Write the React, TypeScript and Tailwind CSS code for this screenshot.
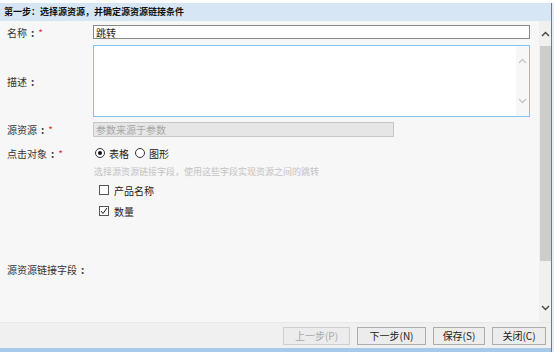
import React from 'react';

const FONT = { fontFamily: '"Microsoft YaHei", "Noto Sans CJK SC", "Noto Sans", sans-serif' };

const Label: React.FC<{ text: string; required?: boolean }> = ({ text, required }) => (
  <div className="w-[93px] shrink-0 pl-[7px] text-[10px] text-[#333] flex items-center">
    {text}
    <span className="ml-[4px] font-bold">:</span>
    {required && <span className="ml-[4px] text-[#e0303a]">*</span>}
  </div>
);

const Chevron: React.FC<{ up?: boolean; className?: string }> = ({ up, className }) => (
  <svg width="9" height="6" viewBox="0 0 9 6" className={className}>
    <path d={up ? 'M1 5L4.5 1.5L8 5' : 'M1 1L4.5 4.5L8 1'} fill="none" stroke="currentColor" strokeWidth="1.4" />
  </svg>
);

const Radio: React.FC<{ checked?: boolean; label: string }> = ({ checked, label }) => (
  <label className="flex items-center gap-[4px]">
    <span className="w-[10px] h-[10px] rounded-full border border-[#333] bg-white flex items-center justify-center">
      {checked && <span className="w-[4px] h-[4px] rounded-full bg-[#111]" />}
    </span>
    <span className="text-[10px] text-[#222]">{label}</span>
  </label>
);

const Check: React.FC<{ checked?: boolean; label: string }> = ({ checked, label }) => (
  <label className="flex items-center gap-[5px] h-[12px]">
    <span className="w-[10px] h-[10px] border border-[#555] bg-white flex items-center justify-center">
      {checked && (
        <svg width="8" height="8" viewBox="0 0 8 8">
          <path d="M1 4L3 6.5L7 1" fill="none" stroke="#222" strokeWidth="1" />
        </svg>
      )}
    </span>
    <span className="text-[10px] text-[#222]">{label}</span>
  </label>
);

const Btn: React.FC<{ w: string; disabled?: boolean; children: React.ReactNode }> = ({ w, disabled, children }) => (
  <button
    className={`${w} h-[18px] border bg-[#ececec] text-[10px] flex items-center justify-center ${
      disabled ? 'border-[#cfcfcf] text-[#a8a8a8]' : 'border-[#adadad] text-[#222]'
    }`}
  >
    {children}
  </button>
);

export default function App() {
  return (
    <div className="w-[554px] h-[352px] overflow-hidden bg-white flex flex-col" style={FONT}>
      <div className="h-[3px] bg-white" />
      <div className="flex flex-1">
        <div className="w-[551px] flex flex-col">
          {/* header */}
          <div className="h-[18px] bg-[#d6e6f5] flex items-center pl-[4px] text-[9px] font-bold text-[#111]">
            第一步：选择源资源，并确定源资源链接条件
          </div>

          {/* body */}
          <div className="h-[301px] flex bg-[#f7f7f7]">
            <div className="flex-1 flex flex-col pt-[4px]">
              <div className="flex items-center h-[14px]">
                <Label text="名称" required />
                <div className="w-[437px] h-[14px] border border-[#8a8a8a] bg-white flex items-center pl-[2px] text-[10px] text-[#222]">
                  跳转
                </div>
              </div>

              <div className="flex items-center mt-[6px]">
                <Label text="描述" />
                <div className="w-[437px] h-[72px] border border-[#7fc6ec] bg-white flex justify-end">
                  <div className="w-[13px] bg-[#f7f7f7] flex flex-col items-center justify-between py-[12px] text-[#c4c4c4]">
                    <Chevron up />
                    <Chevron />
                  </div>
                </div>
              </div>

              <div className="flex items-center mt-[5px]">
                <Label text="源资源" required />
                <div className="w-[301px] h-[15px] border border-[#c6c6c6] bg-[#e6e6e6] flex items-center pl-[2px] text-[10px] text-[#a6a6a6]">
                  参数来源于参数
                </div>
              </div>

              <div className="flex items-center mt-[10px] h-[12px]">
                <Label text="点击对象" required />
                <div className="flex items-center gap-[6px] pl-[2px]">
                  <Radio checked label="表格" />
                  <Radio label="图形" />
                </div>
              </div>

              <div className="pl-[94px] mt-[7px] text-[9px] text-[#c2c2c2] leading-[12px]">
                选择源资源链接字段，使用这些字段实现资源之间的跳转
              </div>

              <div className="pl-[99px] mt-[6px] flex flex-col gap-[9px]">
                <Check label="产品名称" />
                <Check checked label="数量" />
              </div>

              <div className="flex items-center mt-[45px]">
                <Label text="源资源链接字段" />
              </div>
            </div>

            {/* scrollbar */}
            <div className="w-[12px] bg-[#f0f0f0] flex flex-col items-center">
              <div className="h-[25px] flex items-center text-[#444]">
                <Chevron up />
              </div>
              <div className="w-[11px] h-[215px] bg-[#cdcdcd]" />
              <div className="flex-1 flex items-end pb-[11px] text-[#444]">
                <Chevron />
              </div>
            </div>
          </div>

          {/* footer */}
          <div className="h-[26px] bg-[#f0f0f0] flex items-center justify-end gap-[7px] pr-[5px] border-t border-[#e8e8e8]">
            <Btn w="w-[67px]" disabled>上一步(P)</Btn>
            <Btn w="w-[69px]">下一步(N)</Btn>
            <Btn w="w-[52px]">保存(S)</Btn>
            <Btn w="w-[54px]">关闭(C)</Btn>
          </div>
          <div className="h-[4px] bg-[#a9c9ea]" />
        </div>
        <div className="w-[1px] bg-[#6b7b8c]" />
        <div className="w-[2px] bg-[#e8eef5]" />
      </div>
    </div>
  );
}
